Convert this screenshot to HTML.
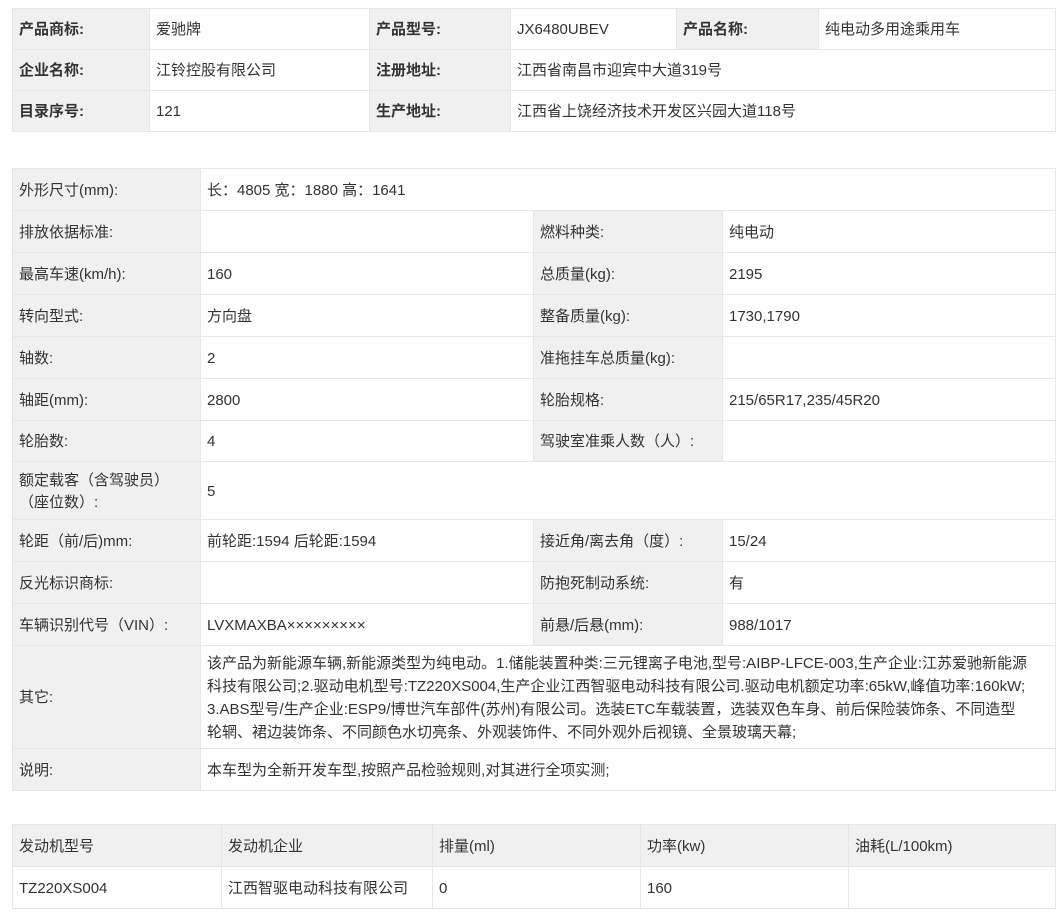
<!DOCTYPE html>
<html><head><meta charset="utf-8"><style>
body{margin:0;background:#fff;font-family:"Liberation Sans","Noto Sans CJK SC",sans-serif;font-size:15px;color:#333;}
table{position:absolute;left:12px;width:1044px;border-collapse:collapse;table-layout:fixed;}
td{border:1px solid #e6e6e6;padding:2px 0 0 6px;height:41px;line-height:22px;vertical-align:middle;box-sizing:border-box;}
td.l{background:#f0f0f0;}
#t1 td.l{font-weight:bold;}
</style></head><body>
<table id="t1" style="top:8px">
<colgroup><col style="width:137px"><col style="width:220px"><col style="width:141px"><col style="width:166px"><col style="width:142px"><col></colgroup>
<tr><td class="l">产品商标:</td><td>爱驰牌</td><td class="l">产品型号:</td><td>JX6480UBEV</td><td class="l">产品名称:</td><td>纯电动多用途乘用车</td></tr>
<tr><td class="l">企业名称:</td><td>江铃控股有限公司</td><td class="l">注册地址:</td><td colspan="3">江西省南昌市迎宾中大道319号</td></tr>
<tr><td class="l">目录序号:</td><td>121</td><td class="l">生产地址:</td><td colspan="3">江西省上饶经济技术开发区兴园大道118号</td></tr>
</table>
<table style="top:168px">
<colgroup><col style="width:188px"><col style="width:333px"><col style="width:189px"><col></colgroup>
<tr style="height:42px"><td class="l">外形尺寸(mm):</td><td colspan="3">长：4805 宽：1880 高：1641</td></tr>
<tr style="height:42px"><td class="l">排放依据标准:</td><td></td><td class="l">燃料种类:</td><td>纯电动</td></tr>
<tr style="height:42px"><td class="l">最高车速(km/h):</td><td>160</td><td class="l">总质量(kg):</td><td>2195</td></tr>
<tr style="height:42px"><td class="l">转向型式:</td><td>方向盘</td><td class="l">整备质量(kg):</td><td>1730,1790</td></tr>
<tr style="height:42px"><td class="l">轴数:</td><td>2</td><td class="l">准拖挂车总质量(kg):</td><td></td></tr>
<tr style="height:42px"><td class="l">轴距(mm):</td><td>2800</td><td class="l">轮胎规格:</td><td>215/65R17,235/45R20</td></tr>
<tr style="height:41px"><td class="l">轮胎数:</td><td>4</td><td class="l">驾驶室准乘人数（人）:</td><td></td></tr>
<tr style="height:58px"><td class="l">额定载客（含驾驶员）<br>（座位数）:</td><td colspan="3">5</td></tr>
<tr style="height:42px"><td class="l">轮距（前/后)mm:</td><td>前轮距:1594 后轮距:1594</td><td class="l">接近角/离去角（度）:</td><td>15/24</td></tr>
<tr style="height:42px"><td class="l">反光标识商标:</td><td></td><td class="l">防抱死制动系统:</td><td>有</td></tr>
<tr style="height:42px"><td class="l">车辆识别代号（VIN）:</td><td>LVXMAXBA×××××××××</td><td class="l">前悬/后悬(mm):</td><td>988/1017</td></tr>
<tr style="height:103px"><td class="l">其它:</td><td colspan="3" style="padding-right:2px;line-height:23px">该产品为新能源车辆,新能源类型为纯电动。1.储能装置种类:三元锂离子电池,型号:AIBP-LFCE-003,生产企业:江苏爱驰新能源<br>科技有限公司;2.驱动电机型号:TZ220XS004,生产企业江西智驱电动科技有限公司.驱动电机额定功率:65kW,峰值功率:160kW;<br>3.ABS型号/生产企业:ESP9/博世汽车部件(苏州)有限公司。选装ETC车载装置，选装双色车身、前后保险装饰条、不同造型<br>轮辋、裙边装饰条、不同颜色水切亮条、外观装饰件、不同外观外后视镜、全景玻璃天幕;</td></tr>
<tr style="height:42px"><td class="l">说明:</td><td colspan="3">本车型为全新开发车型,按照产品检验规则,对其进行全项实测;</td></tr>
</table>
<table style="top:824px">
<colgroup><col style="width:209px"><col style="width:211px"><col style="width:208px"><col style="width:208px"><col></colgroup>
<tr style="height:42px"><td class="l">发动机型号</td><td class="l">发动机企业</td><td class="l">排量(ml)</td><td class="l">功率(kw)</td><td class="l">油耗(L/100km)</td></tr>
<tr style="height:42px"><td>TZ220XS004</td><td>江西智驱电动科技有限公司</td><td>0</td><td>160</td><td></td></tr>
</table>
</body></html>
